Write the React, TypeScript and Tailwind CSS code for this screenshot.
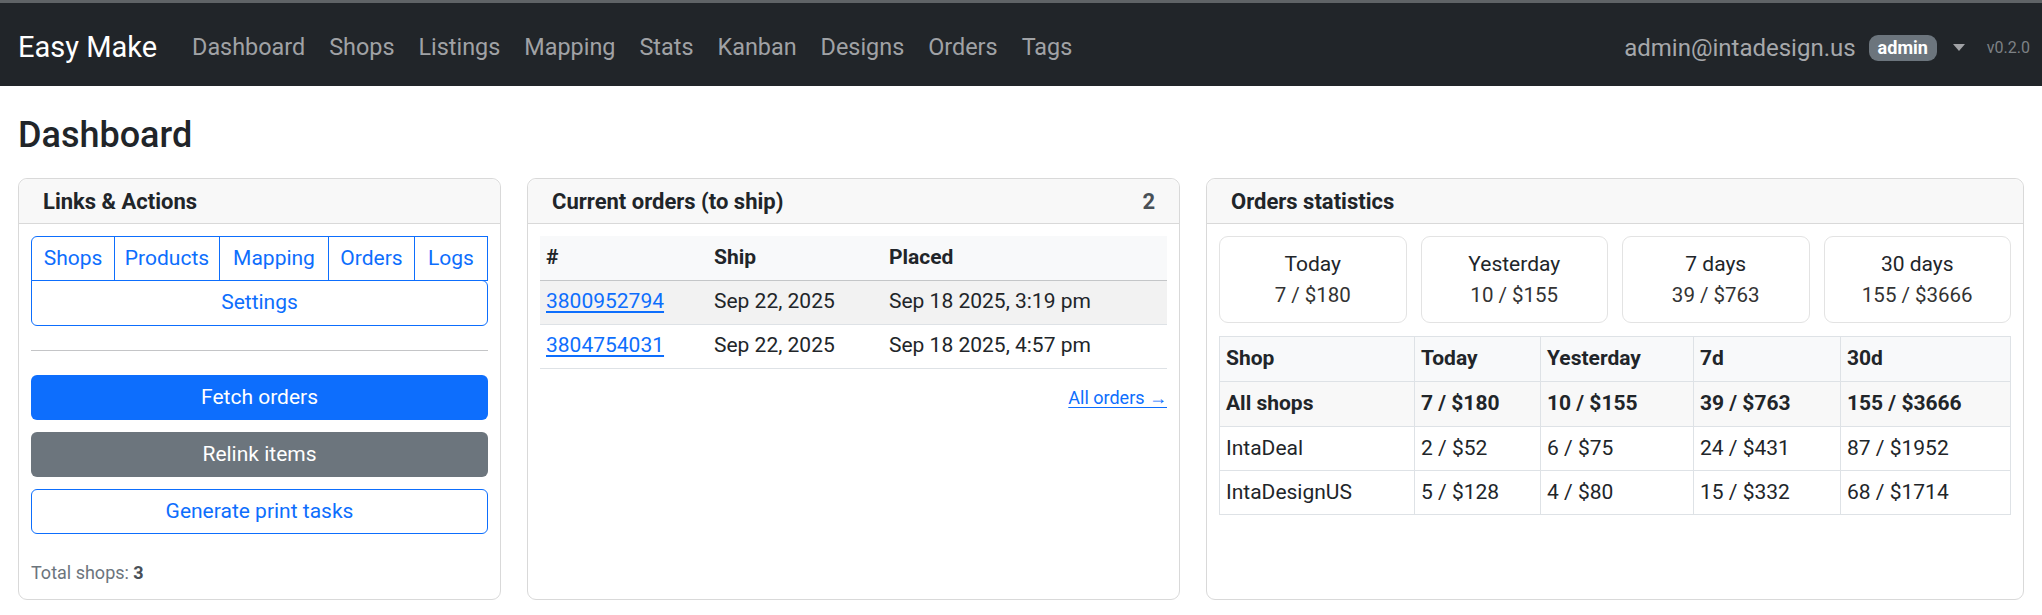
import React from "react";

const navLinks = ["Dashboard", "Shops", "Listings", "Mapping", "Stats", "Kanban", "Designs", "Orders", "Tags"];

const orders = [
  { id: "3800952794", ship: "Sep 22, 2025", placed: "Sep 18 2025, 3:19 pm" },
  { id: "3804754031", ship: "Sep 22, 2025", placed: "Sep 18 2025, 4:57 pm" },
];

const statBoxes = [
  { label: "Today", value: "7 / $180" },
  { label: "Yesterday", value: "10 / $155" },
  { label: "7 days", value: "39 / $763" },
  { label: "30 days", value: "155 / $3666" },
];

const statRows = [
  { shop: "IntaDeal", t: "2 / $52", y: "6 / $75", w: "24 / $431", m: "87 / $1952" },
  { shop: "IntaDesignUS", t: "5 / $128", y: "4 / $80", w: "15 / $332", m: "68 / $1714" },
];

function CardHeader({ title, right }: { title: string; right?: string }) {
  return (
    <div className="h-[45px] shrink-0 flex items-center justify-between px-[24px] bg-[#f8f8f8] border-b border-[#d9d9d9] rounded-t-[9px]">
      <span className="text-[22px] font-bold text-[#212529]">{title}</span>
      {right && <span className="text-[22px] font-bold text-[#495057]">{right}</span>}
    </div>
  );
}

export default function App() {
  return (
    <div className="min-h-screen bg-white font-['Roboto','Liberation_Sans',sans-serif] text-[#212529]">
      <nav className="h-[86px] bg-[#212529] border-t-[3px] border-[#5f6366] flex items-center pt-[6px] pl-[18px] pr-[12px]">
        <span className="text-[29px] text-white mr-[23px]">Easy Make</span>
        <div className="flex items-center">
          {navLinks.map((l) => (
            <span key={l} className="px-[12px] text-[23.4px] text-[#a0a2a5]">
              {l}
            </span>
          ))}
        </div>
        <div className="ml-auto flex items-center">
          <span className="text-[24px] text-[#a6a8ab]">admin@intadesign.us</span>
          <span className="ml-[13px] h-[26px] px-[9px] flex items-center rounded-[9px] bg-[#6c757d] text-white text-[18px] font-bold">
            admin
          </span>
          <span className="ml-[16px] w-0 h-0 border-l-[6px] border-r-[6px] border-t-[7px] border-l-transparent border-r-transparent border-t-[#a0a2a5]"></span>
          <span className="ml-[22px] text-[16px] text-[#7d8185]">v0.2.0</span>
        </div>
      </nav>

      <main className="px-[18px] pt-[28px]">
        <h4 className="text-[36px] font-medium leading-[1.2] mb-[21px]">Dashboard</h4>

        <div className="flex gap-[26px] h-[422px]">
          {/* Links & Actions */}
          <div className="w-[483px] flex flex-col border border-[#d9d9d9] rounded-[9px]">
            <CardHeader title="Links & Actions" />
            <div className="p-[12px] flex flex-col">
              <div className="flex">
                {[
                  { t: "Shops", w: "w-[84px]", c: "rounded-tl-[6px]" },
                  { t: "Products", w: "w-[106px]", c: "-ml-px" },
                  { t: "Mapping", w: "w-[110px]", c: "-ml-px" },
                  { t: "Orders", w: "w-[87px]", c: "-ml-px" },
                  { t: "Logs", w: "flex-1", c: "-ml-px" },
                ].map((b) => (
                  <div
                    key={b.t}
                    className={`${b.w} ${b.c} h-[45px] flex items-center justify-center border border-[#0d6efd] text-[21px] text-[#0d6efd]`}
                  >
                    {b.t}
                  </div>
                ))}
              </div>
              <div className="-mt-px h-[46px] flex items-center justify-center border border-[#0d6efd] rounded-b-[6px] rounded-tr-[6px] text-[21px] text-[#0d6efd]">
                Settings
              </div>
              <hr className="my-[24px] border-0 border-t border-[#c4c5c7]" />
              <div className="flex flex-col gap-[12px]">
                <div className="h-[45px] flex items-center justify-center rounded-[6px] bg-[#0d6efd] text-white text-[21px]">
                  Fetch orders
                </div>
                <div className="h-[45px] flex items-center justify-center rounded-[6px] bg-[#6c757d] text-white text-[21px]">
                  Relink items
                </div>
                <div className="h-[45px] flex items-center justify-center rounded-[6px] border border-[#0d6efd] text-[#0d6efd] text-[21px]">
                  Generate print tasks
                </div>
              </div>
              <div className="mt-[25px] text-[18px] leading-[27px] text-[#6c757d]">
                Total shops: <span className="font-bold text-[#495057]">3</span>
              </div>
            </div>
          </div>

          {/* Current orders */}
          <div className="w-[653px] flex flex-col border border-[#d9d9d9] rounded-[9px]">
            <CardHeader title="Current orders (to ship)" right="2" />
            <div className="p-[12px]">
              <table className="w-full border-collapse text-[21px]">
                <thead>
                  <tr className="h-[44px] bg-[#f8f9fa] border-b border-[#c4c6c8]">
                    <th className="w-[168px] px-[6px] text-left font-bold">#</th>
                    <th className="w-[175px] px-[6px] text-left font-bold">Ship</th>
                    <th className="px-[6px] text-left font-bold">Placed</th>
                  </tr>
                </thead>
                <tbody>
                  {orders.map((o, i) => (
                    <tr key={o.id} className={`h-[44px] border-b border-[#dee2e6] ${i === 0 ? "bg-[#f2f2f2]" : ""}`}>
                      <td className="px-[6px]">
                        <span className="text-[#0d6efd] underline underline-offset-[3px]">{o.id}</span>
                      </td>
                      <td className="px-[6px]">{o.ship}</td>
                      <td className="px-[6px]">{o.placed}</td>
                    </tr>
                  ))}
                </tbody>
              </table>
              <div className="mt-[15px] text-right text-[18px] leading-[27px]">
                <span className="text-[#0d6efd] underline underline-offset-[3px]">All orders →</span>
              </div>
            </div>
          </div>

          {/* Orders statistics */}
          <div className="flex-1 flex flex-col border border-[#d9d9d9] rounded-[9px]">
            <CardHeader title="Orders statistics" />
            <div className="p-[12px]">
              <div className="grid grid-cols-4 gap-[14px]">
                {statBoxes.map((s) => (
                  <div
                    key={s.label}
                    className="h-[87px] flex flex-col items-center justify-center gap-[2px] border border-[#e3e3e3] rounded-[9px]"
                  >
                    <span className="text-[21px] leading-[30px]">{s.label}</span>
                    <span className="text-[20.5px] leading-[29px] text-[#333]">{s.value}</span>
                  </div>
                ))}
              </div>
              <table className="mt-[13px] w-full border-collapse text-[21px]">
                <thead>
                  <tr className="h-[45px] bg-[#f8f9fa] border-b border-[#c4c6c8]">
                    <th className="w-[195px] px-[6px] text-left font-bold border border-[#dee2e6]">Shop</th>
                    <th className="w-[126px] px-[6px] text-left font-bold border border-[#dee2e6]">Today</th>
                    <th className="w-[153px] px-[6px] text-left font-bold border border-[#dee2e6]">Yesterday</th>
                    <th className="w-[147px] px-[6px] text-left font-bold border border-[#dee2e6]">7d</th>
                    <th className="px-[6px] text-left font-bold border border-[#dee2e6]">30d</th>
                  </tr>
                </thead>
                <tbody>
                  <tr className="h-[45px] bg-[#f8f8f8] font-bold">
                    <td className="px-[6px] border border-[#dee2e6]">All shops</td>
                    <td className="px-[6px] border border-[#dee2e6]">7 / $180</td>
                    <td className="px-[6px] border border-[#dee2e6]">10 / $155</td>
                    <td className="px-[6px] border border-[#dee2e6]">39 / $763</td>
                    <td className="px-[6px] border border-[#dee2e6]">155 / $3666</td>
                  </tr>
                  {statRows.map((r) => (
                    <tr key={r.shop} className="h-[44px]">
                      <td className="px-[6px] border border-[#dee2e6]">{r.shop}</td>
                      <td className="px-[6px] border border-[#dee2e6]">{r.t}</td>
                      <td className="px-[6px] border border-[#dee2e6]">{r.y}</td>
                      <td className="px-[6px] border border-[#dee2e6]">{r.w}</td>
                      <td className="px-[6px] border border-[#dee2e6]">{r.m}</td>
                    </tr>
                  ))}
                </tbody>
              </table>
            </div>
          </div>
        </div>
      </main>
    </div>
  );
}
